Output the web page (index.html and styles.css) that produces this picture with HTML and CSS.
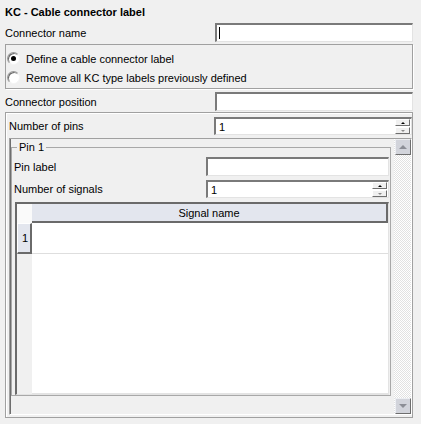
FILE: index.html
```html
<!DOCTYPE html>
<html lang="en">
<head>
    <meta charset="UTF-8">
    <title>KC - Cable connector label</title>
    <link rel="stylesheet" href="styles.css">
</head>
<body>
    <div class="form">
        <div class="title">KC - Cable connector label</div>

        <div class="row">
            <span>Connector name</span>
            <div class="field"><span class="caret"></span></div>
        </div>

        <!-- Action choice -->
        <div class="group">
            <div class="radio-row"><span class="radio checked"></span>Define a cable connector label</div>
            <div class="radio-row"><span class="radio"></span>Remove all KC type labels previously defined</div>
        </div>

        <div class="row row-gap">
            <span>Connector position</span>
            <div class="field"></div>
        </div>

        <div class="panel">
            <div class="row row-spin">
                <span>Number of pins</span>
                <div class="spinner spinner-wide">
                    <span>1</span>
                    <div class="spin-btns">
                        <span class="spin-btn up"></span>
                        <span class="spin-btn down"></span>
                    </div>
                </div>
            </div>

            <div class="scroll">
                <div class="viewport">
                    <fieldset class="pin">
                        <legend>Pin 1</legend>
                        <div class="row">
                            <span>Pin label</span>
                            <div class="field field-pin"></div>
                        </div>
                        <div class="row row-spin pin-signals">
                            <span>Number of signals</span>
                            <div class="spinner field-pin">
                                <span>1</span>
                                <div class="spin-btns">
                                    <span class="spin-btn up"></span>
                                    <span class="spin-btn down"></span>
                                </div>
                            </div>
                        </div>

                        <!-- Signal table -->
                        <div class="table">
                            <div class="corner"></div>
                            <div class="col-head">Signal name</div>
                            <div class="row-head">1</div>
                            <div class="cell"></div>
                            <div class="fill-left"></div>
                            <div class="fill-right"></div>
                        </div>
                    </fieldset>
                </div>
                <div class="vbar">
                    <div class="sbtn"><span class="arrow-up"></span></div>
                    <div class="track"></div>
                    <div class="sbtn"><span class="arrow-down"></span></div>
                </div>
            </div>
        </div>
    </div>
</body>
</html>
```

FILE: styles.css
```css
body {
    margin: 0;
    background-color: #f0f0f0;
    font-family: 'Liberation Sans', Arial, sans-serif;
    font-size: 11px;
    color: #000;
}

.form {
    width: 408px;
    padding-left: 5px;
}

.title {
    height: 23px;
    box-sizing: border-box;
    padding-top: 5px;
    line-height: 14px;
    font-weight: bold;
}

.row {
    display: flex;
    align-items: center;
    justify-content: space-between;
    height: 19px;
}

.row-gap {
    margin-top: 3px;
}

.row-spin {
    height: 18px;
}

/* sunken text field */
.field,
.spinner {
    box-sizing: border-box;
    width: 198px;
    height: 19px;
    background-color: #fff;
    border-style: solid;
    border-width: 2px 1px 1px 2px;
    border-color: #7a7a7a #e3e3e3 #e3e3e3 #7a7a7a;
    display: flex;
    align-items: center;
}

.caret {
    width: 1px;
    height: 12px;
    margin-left: 2px;
    background-color: #000;
}

.spinner {
    height: 18px;
    justify-content: space-between;
    padding-left: 3px;
}

.spin-btns {
    display: flex;
    flex-direction: column;
    gap: 1px;
    margin-right: 1px;
}

.spin-btn {
    width: 15px;
    height: 7px;
    box-sizing: border-box;
    background-color: #f0f0f0;
    border: 1px solid;
    border-color: #fff #6e6e6e #6e6e6e #fff;
    display: flex;
    align-items: center;
    justify-content: center;
}

.spin-btn.up::after {
    content: '';
    border-left: 2px solid transparent;
    border-right: 2px solid transparent;
    border-bottom: 2px solid #000;
}

.spin-btn.down::after {
    content: '';
    border-left: 2px solid transparent;
    border-right: 2px solid transparent;
    border-top: 2px solid #8a8a8a;
}

.group {
    margin-top: 2px;
    height: 45px;
    box-sizing: border-box;
    border: 1px solid #a0a0a0;
    box-shadow: 1px 1px 0 #fff;
    padding: 4px 0 0 1px;
}

.radio-row {
    display: flex;
    align-items: center;
    gap: 6px;
    height: 19px;
}

.radio {
    width: 13px;
    height: 13px;
    box-sizing: border-box;
    border-radius: 50%;
    background-color: #fff;
    border: 1px solid;
    border-color: #9a9a9a #f4f4f4 #f4f4f4 #9a9a9a;
    box-shadow: inset 1px 1px 0 #6a6a6a;
    display: flex;
    align-items: center;
    justify-content: center;
}

.radio.checked::after {
    content: '';
    width: 5px;
    height: 5px;
    border-radius: 50%;
    background-color: #000;
}

.panel {
    margin-top: 1px;
    height: 306px;
    box-sizing: border-box;
    border: 1px solid #a0a0a0;
    box-shadow: inset 1px 1px 0 #fff;
    padding: 4px 0 0 3px;
}

.scroll {
    display: flex;
    margin-top: 3px;
    height: 277px;
    box-sizing: border-box;
    border: 1px solid;
    border-color: #a0a0a0 #fff #fff #a0a0a0;
}

.viewport {
    flex: 1;
    padding: 1px 3px 0 1px;
    box-shadow: inset 1px 0 0 #6e6e6e;
}

.pin {
    margin: 0;
    padding: 3px 1px 0 2px;
    min-width: 0;
    border: 1px solid #a8a8a8;
}

.pin legend {
    margin-left: 3px;
    padding: 0 2px;
    line-height: 14px;
}

.field-pin {
    width: 183px;
}

.pin-signals {
    margin-top: 4px;
}

.table {
    display: grid;
    grid-template-columns: 15px 1fr;
    grid-template-rows: 19px 31px 1fr;
    margin: 4px 0 0 1px;
    height: 193px;
    box-sizing: border-box;
    border-style: solid;
    border-width: 2px 1px 1px 2px;
    border-color: #6a6a6a #e3e3e3 #e3e3e3 #6a6a6a;
}

.corner {
    background-color: #fafafa;
}

.col-head {
    background-color: #e3e6ee;
    border-right: 2px solid #6a6a6a;
    border-bottom: 2px solid #6a6a6a;
    display: flex;
    align-items: center;
    justify-content: center;
}

.row-head {
    background-color: #e3e6ee;
    border-top: 1px solid #fff;
    border-left: 1px solid #fff;
    border-right: 2px solid #6a6a6a;
    border-bottom: 2px solid #6a6a6a;
    display: flex;
    align-items: center;
    padding-left: 4px;
}

.cell {
    background-color: #fff;
    border-bottom: 1px solid #dedede;
}

.fill-left {
    background-color: #f0f0f0;
}

.fill-right {
    background-color: #fff;
    border-bottom: 1px solid #e3e3e3;
}

/* vertical scrollbar */
.vbar {
    width: 17px;
    display: flex;
    flex-direction: column;
    background-color: #fff;
    background-image: conic-gradient(#e2e2e2 25%, transparent 0 50%, #e2e2e2 0 75%, transparent 0);
    background-size: 2px 2px;
}

.track {
    flex: 1;
}

.sbtn {
    height: 16px;
    margin-left: 1px;
    box-sizing: border-box;
    background-color: #d2d4db;
    border: 1px solid;
    border-color: #eceef2 #6e6e6e #6e6e6e #eceef2;
    display: flex;
    align-items: center;
    justify-content: center;
}

.arrow-up {
    border-left: 4px solid transparent;
    border-right: 4px solid transparent;
    border-bottom: 4px solid #8c8e96;
}

.arrow-down {
    border-left: 4px solid transparent;
    border-right: 4px solid transparent;
    border-top: 4px solid #8c8e96;
}
```
